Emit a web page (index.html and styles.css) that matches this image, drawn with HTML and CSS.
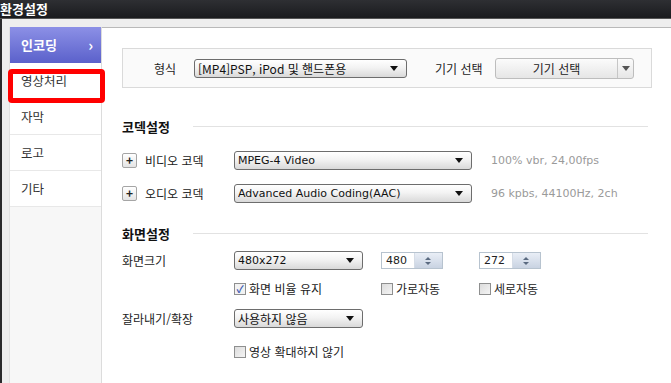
FILE: index.html
```html
<!DOCTYPE html>
<html lang="ko">
<head>
  <meta charset="UTF-8" />
  <title>환경설정</title>
  <link rel="stylesheet" href="styles.css">
</head>
<body>
  <div class="titlebar">환경설정</div>

  <div class="window">
    <div class="frame">
      <!-- left menu -->
      <ul class="menu">
        <li class="menu-item active">인코딩 <span class="chev">›</span></li>
        <li class="menu-item marked">영상처리</li>
        <li class="menu-item">자막</li>
        <li class="menu-item">로고</li>
        <li class="menu-item">기타</li>
        <li class="menu-fill"></li>
      </ul>

      <div class="content">
        <div class="format-box">
          <span class="format-label">형식</span>
          <div class="combo combo-format"><span>[MP4]PSP, iPod 및 핸드폰용</span><i class="arrow"></i></div>
          <span class="device-label">기기 선택</span>
          <div class="device-btn">
            <span class="device-text">기기 선택</span>
            <span class="device-drop"><i class="arrow"></i></span>
          </div>
        </div>

        <div class="section-head"><h2>코덱설정</h2><span class="rule"></span></div>

        <div class="codec-row">
          <span class="plus">+</span>
          <span class="codec-label">비디오 코덱</span>
          <div class="combo combo-wide"><span class="latin">MPEG-4 Video</span><i class="arrow"></i></div>
          <span class="info latin">100% vbr, 24,00fps</span>
        </div>
        <div class="codec-row">
          <span class="plus">+</span>
          <span class="codec-label">오디오 코덱</span>
          <div class="combo combo-wide"><span class="latin">Advanced Audio Coding(AAC)</span><i class="arrow"></i></div>
          <span class="info latin">96 kpbs, 44100Hz, 2ch</span>
        </div>

        <div class="section-head head-screen"><h2>화면설정</h2><span class="rule"></span></div>

        <div class="form-row">
          <span class="row-label">화면크기</span>
          <div class="combo combo-small"><span class="latin">480x272</span><i class="arrow"></i></div>
          <div class="spin"><span class="latin">480</span><span class="spin-btn"><i class="up"></i><i class="down"></i></span></div>
          <div class="spin"><span class="latin">272</span><span class="spin-btn"><i class="up"></i><i class="down"></i></span></div>
        </div>
        <div class="form-row check-row">
          <span class="row-label"></span>
          <label class="check check-first"><span class="box checked">✓</span>화면 비율 유지</label>
          <label class="check check-mid"><span class="box"></span>가로자동</label>
          <label class="check"><span class="box"></span>세로자동</label>
        </div>
        <div class="form-row crop-row">
          <span class="row-label">잘라내기/확장</span>
          <div class="combo combo-small"><span>사용하지 않음</span><i class="arrow"></i></div>
        </div>
        <div class="form-row check-row zoom-row">
          <span class="row-label"></span>
          <label class="check"><span class="box"></span>영상 확대하지 않기</label>
        </div>
      </div>
    </div>
  </div>
</body>
</html>
```

FILE: styles.css
```css
* {
  box-sizing: border-box;
}
body {
  margin: 0;
  width: 671px;
  height: 383px;
  overflow: hidden;
  background: #1c1d20;
  font-family: "Noto Sans CJK KR", "DejaVu Sans", sans-serif;
  font-size: 12px;
  color: #222;
}

.titlebar {
  height: 19px;
  background: linear-gradient(#2e2f33, #1a1b1e);
  color: #fff;
  font-weight: 700;
  font-size: 13px;
  line-height: 17px;
  border-bottom: 1px solid #555;
}

.window {
  height: 364px;
  background: #eeeeee;
  border-left: 2px solid #2a2a2c;
  padding: 8px 0 0 7px;
}

.frame {
  display: flex;
  height: 100%;
  background: #fff;
  border-top: 1px solid #b9b9b9;
}

/* left menu */
.menu {
  list-style: none;
  margin: -1px 0 0 0;
  padding: 0;
  width: 93px;
  display: flex;
  flex-direction: column;
  border-right: 1px solid #dcdcdc;
  border-left: 1px solid #e2e2e2;
}
.menu-item {
  height: 36px;
  line-height: 36px;
  padding-left: 11px;
  font-size: 12.5px;
  color: #333;
  border-bottom: 1px solid #e8e8e8;
  position: relative;
}
.menu-item.active {
  background: linear-gradient(#8c90e6, #5b61cb);
  color: #fff;
  font-weight: 700;
  font-size: 13px;
  line-height: 35px;
  border-bottom: none;
}
.chev {
  position: absolute;
  right: 8px;
  top: 0;
  font-size: 15px;
}
.menu-item.marked::after {
  content: "";
  box-sizing: border-box;
  position: absolute;
  left: -2px;
  top: 6px;
  width: 97px;
  height: 34px;
  border: 5px solid #ff0000;
  border-radius: 4px;
}
.menu-fill {
  flex: 1;
  background: #f7f7f7;
}

/* content */
.content {
  flex: 1;
  padding: 20px 19px 0 20px;
}

.format-box {
  height: 40px;
  border: 1px solid #dadada;
  background: #fafafa;
  display: flex;
  align-items: center;
  padding-left: 31px;
}
.format-label {
  width: 40px;
}
.device-label {
  margin-left: 28px;
  width: 60px;
}

.combo {
  height: 19px;
  border: 1px solid #6d6d6d;
  border-radius: 3px;
  background: linear-gradient(#ffffff, #f3f3f3 45%, #d9d9d9);
  display: flex;
  align-items: center;
  padding-left: 3px;
  font-size: 12px;
  color: #111;
}
.combo span {
  flex: 1;
  white-space: nowrap;
  overflow: hidden;
}
.arrow {
  display: block;
  width: 0;
  height: 0;
  margin: 0 8px 0 4px;
  border-left: 4px solid transparent;
  border-right: 4px solid transparent;
  border-top: 5px solid #111;
}
.combo-format {
  width: 213px;
}
.combo-wide {
  width: 238px;
}
.combo-small {
  width: 129px;
}

.device-btn {
  width: 139px;
  height: 21px;
  border: 1px solid #bdbdbd;
  border-radius: 3px;
  background: linear-gradient(#fbfbfb, #e6e6e6);
  display: flex;
  align-items: center;
}
.device-text {
  flex: 1;
  text-align: center;
}
.device-drop {
  width: 16px;
  height: 100%;
  border-left: 1px solid #c6c6c6;
  display: flex;
  align-items: center;
}
.device-drop .arrow {
  margin: 0 0 0 4px;
  border-top-color: #555;
}

.latin {
  font-family: "DejaVu Sans", sans-serif;
  font-size: 11px;
}

.section-head {
  display: flex;
  align-items: center;
  margin-top: 29px;
  height: 18px;
}
.section-head h2 {
  margin: 0;
  font-size: 13px;
  font-weight: 700;
  width: 71px;
  color: #111;
}
.section-head .rule {
  flex: 1;
  height: 1px;
  background: #e2e2e2;
  margin-right: 4px;
}
.head-screen {
  margin-top: 21px;
}

.codec-row {
  display: flex;
  align-items: center;
  height: 19px;
  margin-top: 16px;
}
.codec-row + .codec-row {
  margin-top: 14px;
}
.plus {
  width: 15px;
  height: 15px;
  border: 1px solid #a5a5a5;
  border-radius: 2px;
  background: linear-gradient(#fff, #e4e4e4);
  font-size: 12px;
  font-weight: 700;
  line-height: 12px;
  text-align: center;
}
.codec-label {
  margin-left: 8px;
  width: 89px;
}
.info {
  margin-left: 19px;
  color: #9a9a9a;
}

.form-row {
  display: flex;
  align-items: center;
  height: 19px;
  margin-top: 9px;
}
.row-label {
  width: 112px;
}
.spin {
  width: 62px;
  height: 17px;
  border: 1px solid #b7c3cf;
  background: #fff;
  display: flex;
  align-items: center;
  padding-left: 4px;
  margin-left: 18px;
}
.spin + .spin {
  margin-left: 36px;
}
.spin span {
  flex: 1;
}
.spin-btn {
  width: 15px;
  height: 15px;
  background: linear-gradient(#e9eef6, #c9d3e2);
  border-left: 1px solid #d5dce6;
  display: flex;
  flex-direction: column;
  align-items: center;
  justify-content: center;
  gap: 2px;
}
.spin-btn i {
  display: block;
  width: 0;
  height: 0;
  border-left: 3px solid transparent;
  border-right: 3px solid transparent;
}
.spin-btn .up {
  border-bottom: 3px solid #5a6a80;
}
.spin-btn .down {
  border-top: 3px solid #5a6a80;
}

.check-row {
  margin-top: 9px;
}
.check {
  display: flex;
  align-items: center;
  gap: 3px;
}
.check-first {
  width: 147px;
}
.check-mid {
  width: 98px;
}
.box {
  width: 12px;
  height: 12px;
  border: 1px solid #8e8f8f;
  background: linear-gradient(135deg, #dcdcdc, #f4f4f4);
  font-size: 10px;
  line-height: 10px;
  color: #3a57b0;
  text-align: center;
  font-weight: 700;
}
.box.checked {
  background: #f2f2f2;
}
.crop-row {
  margin-top: 11px;
}
.zoom-row {
  margin-top: 14px;
}
```
